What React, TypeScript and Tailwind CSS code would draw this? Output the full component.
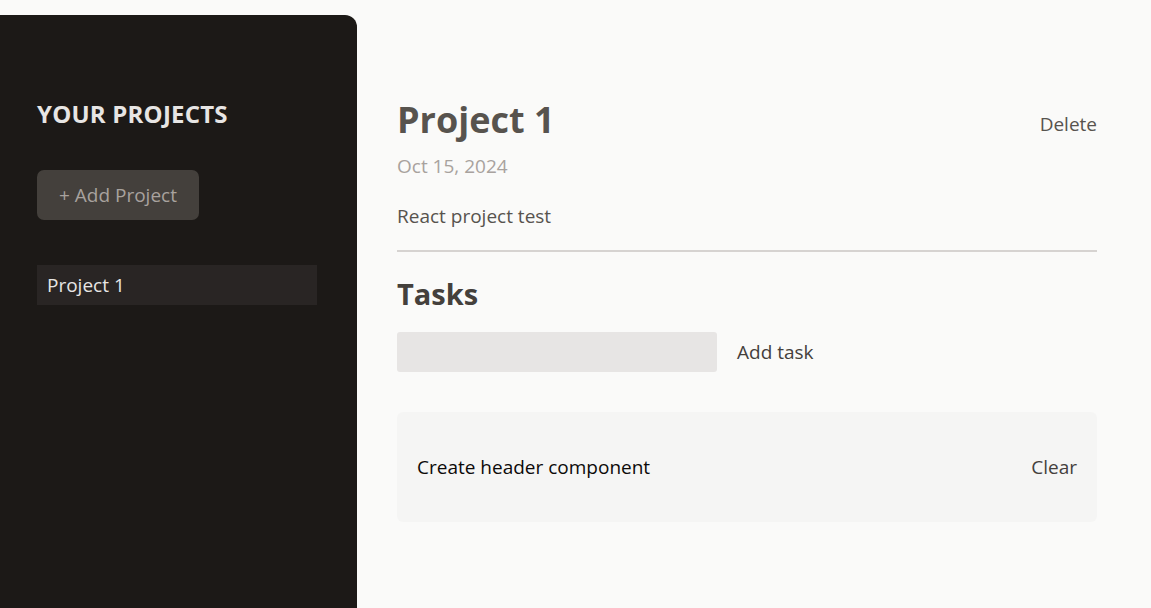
import { useState } from 'react';

interface Task {
    id: number;
    text: string;
}

export default function App() {
    const [tasks, setTasks] = useState<Task[]>([{ id: 1, text: 'Create header component' }]);
    const [entered, setEntered] = useState('');

    function handleAdd() {
        if (entered.trim() === '') return;
        setTasks((prev) => [{ id: Date.now(), text: entered }, ...prev]);
        setEntered('');
    }

    return (
        <div className="min-h-screen bg-[#fafaf9] flex gap-[40px] pt-[15px] font-['Open_Sans',sans-serif]">
            <aside className="w-[357px] h-[593px] shrink-0 bg-[#1c1917] text-[#fafaf9] rounded-tr-[12px] px-[37px] pt-[84px]">
                <h2 className="text-[24px] leading-[30px] font-bold uppercase tracking-[0.2px] text-[#e7e5e4]">Your Projects</h2>
                <div className="mt-[41px]">
                    <button className="h-[50px] px-[22px] rounded-[7px] bg-[#44403c] text-[#a8a29e] text-[19px]">
                        + Add Project
                    </button>
                </div>
                <ul className="mt-[45px]">
                    <li>
                        <button className="w-[280px] h-[40px] text-left px-[10px] bg-[#292524] text-[#e7e5e4] text-[19px]">
                            Project 1
                        </button>
                    </li>
                </ul>
            </aside>

            <div className="w-[700px] pt-[83px]">
                <header className="pb-[20px] mb-[16px] border-b-2 border-[#d6d3d1]">
                    <div className="flex items-center justify-between">
                        <h1 className="text-[36px] leading-[44px] font-bold text-[#57534e]">Project 1</h1>
                        <button className="mt-[8px] text-[19px] text-[#57534e]">Delete</button>
                    </div>
                    <p className="mt-[10px] text-[19px] leading-[28px] text-[#a8a29e]">Oct 15, 2024</p>
                    <p className="mt-[22px] text-[19px] leading-[28px] text-[#57534e]">React project test</p>
                </header>

                <section>
                    <h2 className="text-[29px] leading-[36px] font-bold text-[#44403c] mt-[24px]">Tasks</h2>
                    <div className="flex items-center gap-[20px] mt-[20px]">
                        <input
                            type="text"
                            value={entered}
                            onChange={(e) => setEntered(e.target.value)}
                            className="w-[320px] h-[40px] px-[10px] rounded-[3px] bg-[#e7e5e4] outline-none"
                        />
                        <button onClick={handleAdd} className="text-[19px] text-[#44403c]">
                            Add task
                        </button>
                    </div>
                    <ul className="mt-[40px] p-[20px] rounded-[6px] bg-[#f5f5f4]">
                        {tasks.map((task) => (
                            <li key={task.id} className="flex justify-between items-center my-[20px] h-[30px]">
                                <span className="text-[19px] text-[#0c0a09]">{task.text}</span>
                                <button
                                    onClick={() => setTasks((prev) => prev.filter((t) => t.id !== task.id))}
                                    className="text-[19px] text-[#44403c]"
                                >
                                    Clear
                                </button>
                            </li>
                        ))}
                    </ul>
                </section>
            </div>
        </div>
    );
}
